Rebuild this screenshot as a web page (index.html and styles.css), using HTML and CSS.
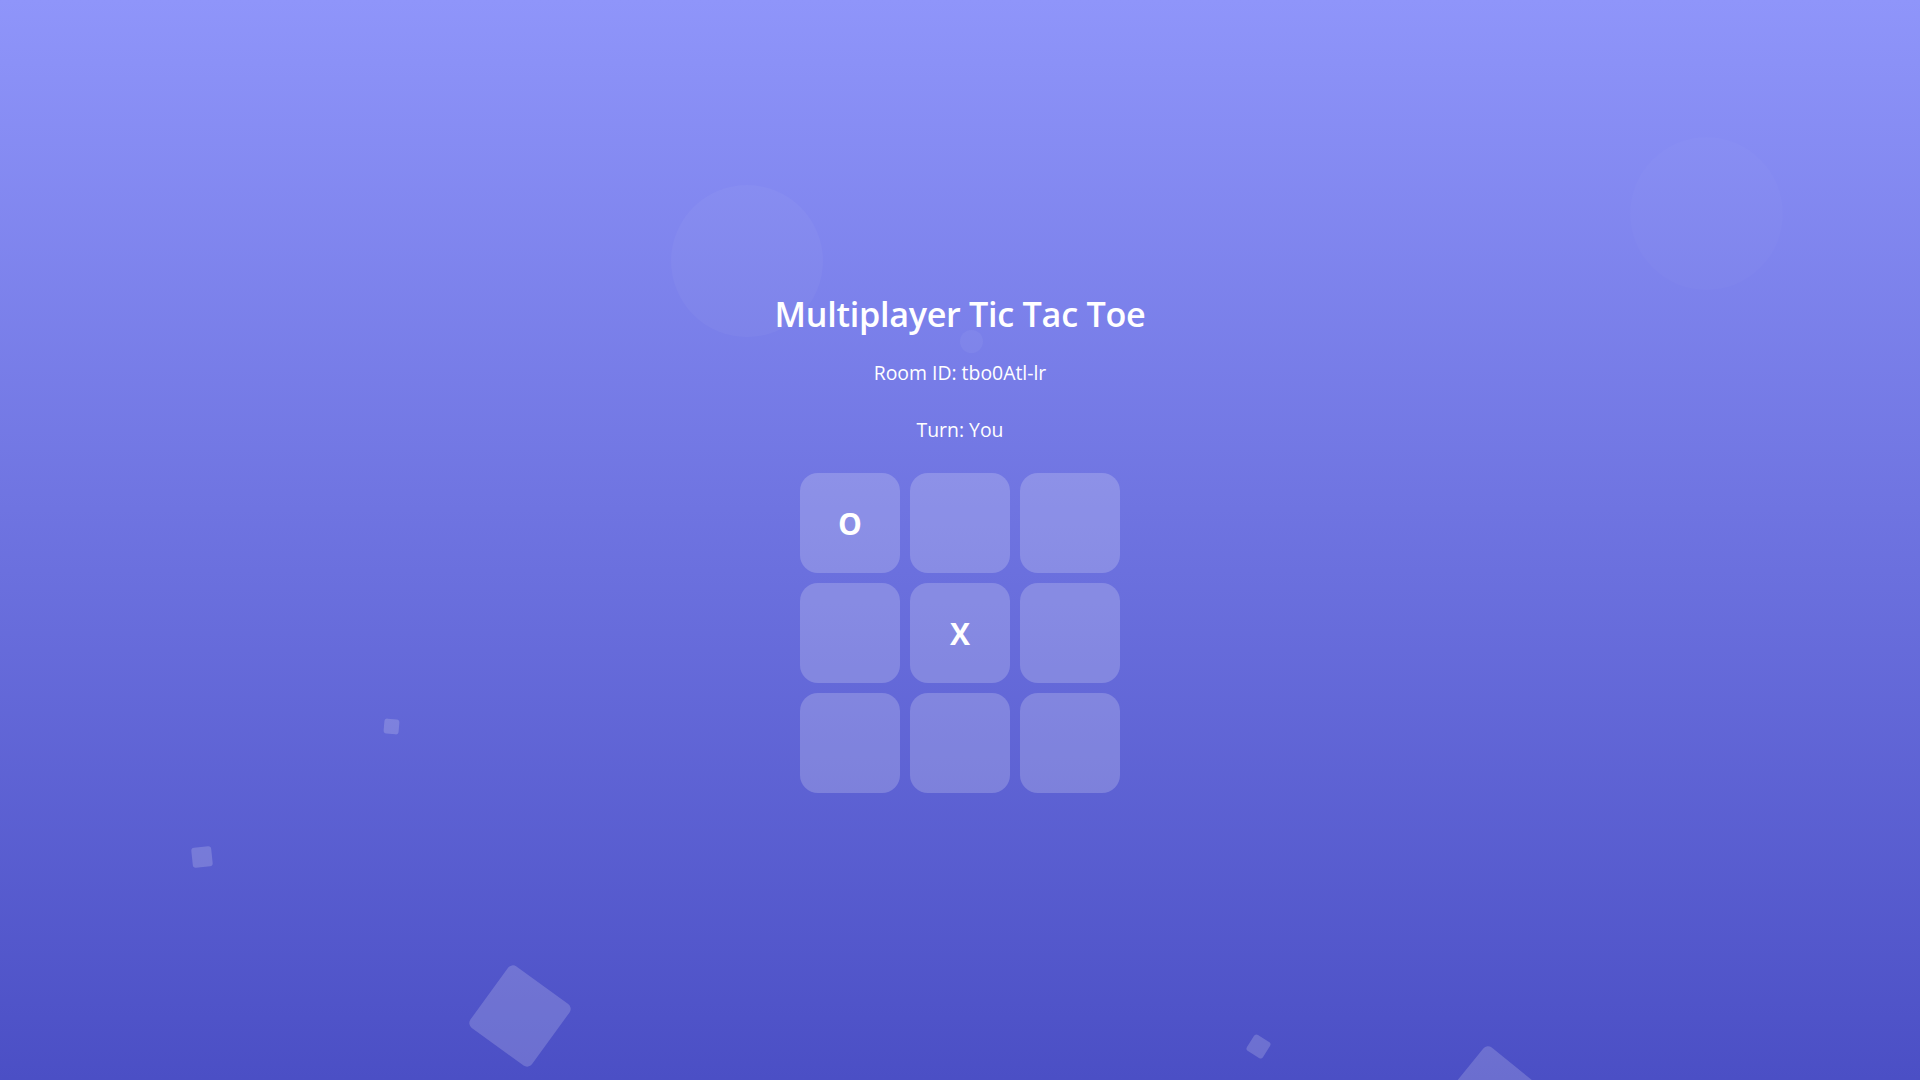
FILE: index.html
```html
<!DOCTYPE html>
<html lang="en">
<head>
<meta charset="utf-8">
<title>Multiplayer Tic Tac Toe</title>
<link rel="stylesheet" href="styles.css">
</head>
<body>
<div class="bg">
  <span class="shape circle c1"></span>
  <span class="shape circle c2"></span>
  <span class="shape circle c3"></span>
  <span class="shape sq s1"></span>
  <span class="shape sq s2"></span>
  <span class="shape sq s3"></span>
  <span class="shape sq s4"></span>
  <span class="shape sq s5"></span>
</div>
<main class="game">
  <h1 class="title">Multiplayer Tic Tac Toe</h1>
  <p class="info">Room ID: tbo0Atl-lr</p>
  <p class="info">Turn: You</p>
  <div class="board">
    <button class="cell">O</button>
    <button class="cell"></button>
    <button class="cell"></button>
    <button class="cell"></button>
    <button class="cell">X</button>
    <button class="cell"></button>
    <button class="cell"></button>
    <button class="cell"></button>
    <button class="cell"></button>
  </div>
</main>
</body>
</html>
```

FILE: styles.css
```css
* { box-sizing: border-box; }
html, body { margin: 0; padding: 0; height: 100%; overflow: hidden; }
body {
  font-family: "Open Sans", "Noto Sans", sans-serif;
  color: #fff;
  background: linear-gradient(180deg, #8f95fa 0%, #4b4fc5 100%);
  position: relative;
}
.bg { position: absolute; inset: 0; pointer-events: none; overflow: hidden; }
.shape { position: absolute; display: block; }
.circle { border-radius: 50%; background: rgba(255,255,255,0.035); }
.c1 { left: 671px; top: 185px; width: 152px; height: 152px; }
.c2 { left: 960px; top: 330px; width: 23px; height: 23px; background: rgba(255,255,255,0.05); }
.c3 { left: 1630px; top: 137px; width: 153px; height: 153px; background: rgba(255,255,255,0.018); }
.sq { background: rgba(255,255,255,0.18); border-radius: 5px; }
.s1 { left: 384px; top: 719px; width: 15px; height: 15px; transform: rotate(5deg); border-radius: 3px; }
.s2 { left: 192px; top: 847px; width: 20px; height: 20px; transform: rotate(-6deg); border-radius: 3px; }
.s3 { left: 482px; top: 978px; width: 76px; height: 76px; transform: rotate(36deg); border-radius: 6px; }
.s4 { left: 1249px; top: 1037px; width: 19px; height: 19px; transform: rotate(32deg); border-radius: 3px; }
.s5 { left: 1453px; top: 1060px; width: 80px; height: 80px; transform: rotate(39deg); border-radius: 6px; }

.game {
  position: relative;
  height: 100vh;
  display: flex;
  flex-direction: column;
  align-items: center;
  justify-content: center;
  padding-top: 6px;
}
.title {
  margin: 0 0 25px;
  font-size: 34.2px;
  font-weight: 600;
  line-height: 1.2;
  letter-spacing: -0.3px;
}
.info {
  margin: 0 0 30px;
  font-size: 19.4px;
  line-height: 27px;
}
.board {
  display: grid;
  grid-template-columns: repeat(3, 100px);
  grid-template-rows: repeat(3, 100px);
  gap: 10px;
}
.cell {
  border: none;
  border-radius: 18px;
  background: rgba(255,255,255,0.2);
  color: #fff;
  font-family: "Open Sans", "Noto Sans", sans-serif;
  font-size: 30px;
  font-weight: 700;
  display: flex;
  align-items: center;
  justify-content: center;
  padding: 0;
}
```
